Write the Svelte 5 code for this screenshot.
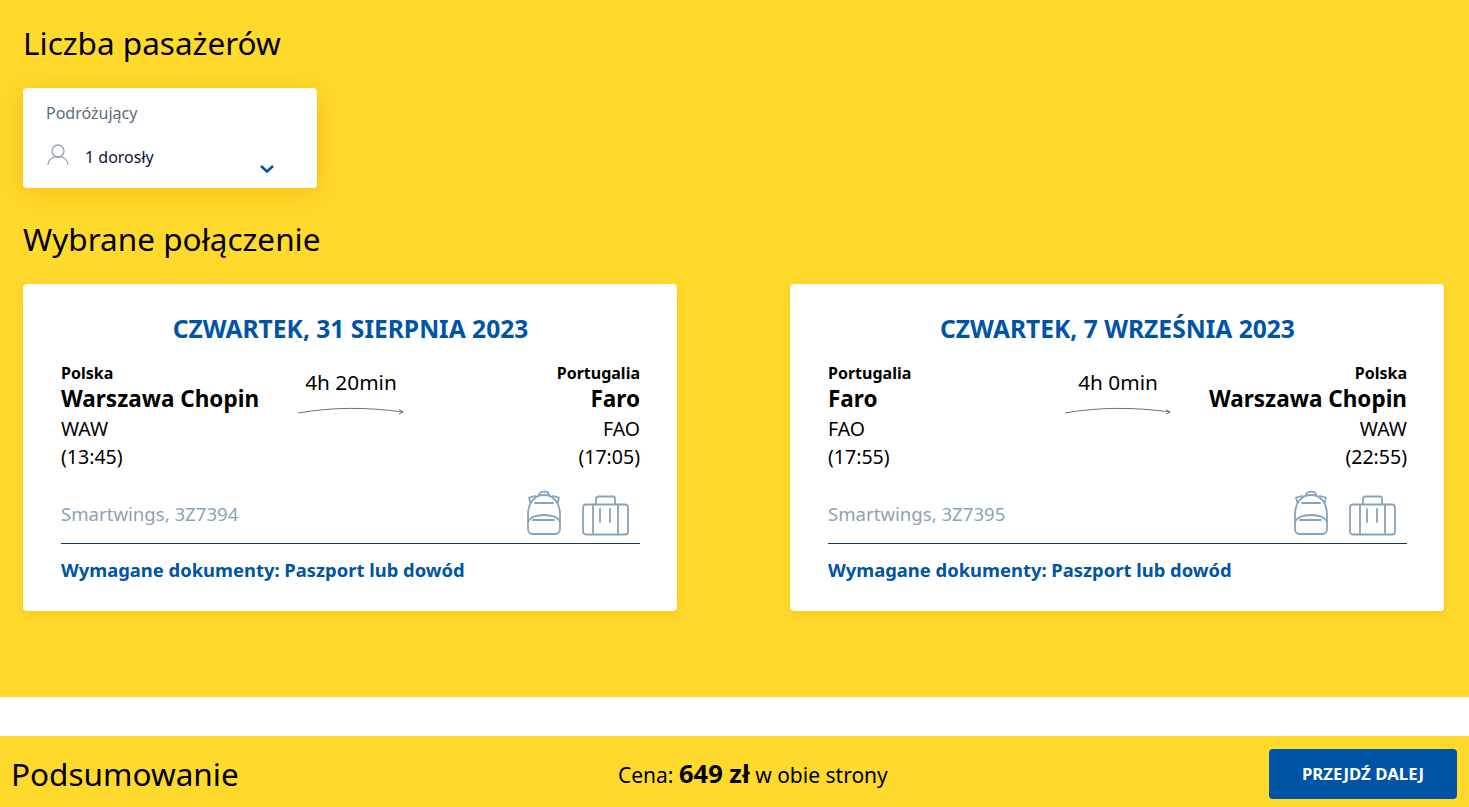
<script>
  const legs = [
    {
      date: 'CZWARTEK, 31 SIERPNIA 2023',
      fromCountry: 'Polska', fromCity: 'Warszawa Chopin', fromCode: 'WAW', fromTime: '(13:45)',
      toCountry: 'Portugalia', toCity: 'Faro', toCode: 'FAO', toTime: '(17:05)',
      duration: '4h 20min', flight: 'Smartwings, 3Z7394'
    },
    {
      date: 'CZWARTEK, 7 WRZEŚNIA 2023',
      fromCountry: 'Portugalia', fromCity: 'Faro', fromCode: 'FAO', fromTime: '(17:55)',
      toCountry: 'Polska', toCity: 'Warszawa Chopin', toCode: 'WAW', toTime: '(22:55)',
      duration: '4h 0min', flight: 'Smartwings, 3Z7395'
    }
  ];
</script>

<div class="page">
  <main class="main">
    <h2 class="title">Liczba pasażerów</h2>
    <div class="passengers">
      <div class="pass-label">Podróżujący</div>
      <div class="pass-row">
        <svg class="person" width="24" height="24" viewBox="0 0 24 24" fill="none" stroke="#8aa3b8" stroke-width="1.3">
          <circle cx="12" cy="8" r="6" />
          <path d="M2 22c0-5 4-8.500 10-8.500s10 3.500 10 8.500" />
        </svg>
        <span class="pass-value">1 dorosły</span>
        <svg class="chevron" width="16" height="10" viewBox="0 0 16 10" fill="none" stroke="#0054a6" stroke-width="2.600">
          <path d="M2 2l6 5.500L14 2" />
        </svg>
      </div>
    </div>

    <h2 class="title second">Wybrane połączenie</h2>
    <div class="cards">
      {#each legs as leg}
        <section class="card">
          <h3 class="date">{leg.date}</h3>
          <div class="route">
            <div class="end">
              <div class="country">{leg.fromCountry}</div>
              <div class="city">{leg.fromCity}</div>
              <div class="code">{leg.fromCode}</div>
              <div class="code">{leg.fromTime}</div>
            </div>
            <div class="middle">
              <div class="duration">{leg.duration}</div>
              <svg width="108" height="10" viewBox="0 0 108 10" fill="none" stroke="#4a4a4a" stroke-width="0.8">
                <path d="M1 8C35 2 70 2 106 7" />
                <path d="M102 4.500l4 2.500-4 2" />
              </svg>
            </div>
            <div class="end right">
              <div class="country">{leg.toCountry}</div>
              <div class="city">{leg.toCity}</div>
              <div class="code">{leg.toCode}</div>
              <div class="code">{leg.toTime}</div>
            </div>
          </div>
          <div class="flight-row">
            <span class="flight">{leg.flight}</span>
            <div class="bags">
              <svg width="36" height="46" viewBox="0 0 36 46" fill="none" stroke="#8aa3b8" stroke-width="1.800" stroke-linecap="round" stroke-linejoin="round">
                <path d="M13 5c0-4.500 10-4.500 10 0" />
                <path d="M4.500 13L3 7.500 9 6M31.500 13L33 7.500 27 6" />
                <path d="M2 25C2 13 8 5 18 5s16 8 16 20v14c0 3-2 5-4.500 5h-23C4 44 2 42 2 39z" />
                <path d="M2 32c2-5 8-7 16-7s14 2 16 7" />
                <path d="M9 13h18M7 30h21" />
              </svg>
              <svg width="48" height="42" viewBox="0 0 48 42" fill="none" stroke="#8aa3b8" stroke-width="1.800" stroke-linecap="round" stroke-linejoin="round">
                <path d="M14 10V5c0-1.500 1-2.500 2.500-2.500h15C33 2.500 33 3.500 33 5v5" />
                <rect x="1" y="10.500" width="45" height="30" rx="3" />
                <path d="M11 10.500v30M36 10.500v30M18 15v13M28 15v13" />
              </svg>
            </div>
          </div>
          <div class="docs">Wymagane dokumenty: Paszport lub dowód</div>
        </section>
      {/each}
    </div>
  </main>

  <footer class="summary">
    <div class="summary-title">Podsumowanie</div>
    <div class="price">Cena: <b>649 zł</b> w obie strony</div>
    <button class="next">PRZEJDŹ DALEJ</button>
  </footer>
</div>

<style>
  :global(body) {
    margin: 0;
    background: #fff;
    font-family: "Noto Sans", "Open Sans", sans-serif;
    color: #000;
  }
  .page {
    height: 807px;
    display: flex;
    flex-direction: column;
    justify-content: space-between;
    overflow: hidden;
  }
  .main {
    height: 697px;
    box-sizing: border-box;
    background: #ffd92c;
    padding: 23px 25px 0 23px;
  }
  .title {
    margin: 0;
    font-size: 31.500px;
    font-weight: 400;
    line-height: 40px;
  }
  .second {
    margin-top: 31px;
  }
  .passengers {
    margin-top: 25px;
    width: 294px;
    height: 100px;
    box-sizing: border-box;
    padding: 14px 42px 0 23px;
    background: #fff;
    border-radius: 4px;
    box-shadow: 0 4px 24px rgba(235, 175, 0, 0.6);
  }
  .pass-label {
    font-size: 16px;
    line-height: 22px;
    color: #5b6b7a;
  }
  .pass-row {
    display: flex;
    align-items: flex-start;
    margin-top: 22px;
  }
  .person {
    margin-right: 15px;
    margin-top: -3px;
  }
  .pass-value {
    font-size: 16px;
    line-height: 22px;
    color: #10103a;
  }
  .chevron {
    margin-left: auto;
    margin-top: 18px;
  }
  .cards {
    margin-top: 25px;
    display: grid;
    grid-template-columns: 654px 654px;
    justify-content: space-between;
  }
  .card {
    height: 327px;
    box-sizing: border-box;
    padding: 27px 37px 0 38px;
    background: #fff;
    border-radius: 4px;
    box-shadow: 0 3px 10px rgba(235, 180, 0, 0.4);
  }
  .date {
    margin: 0;
    text-align: center;
    font-size: 24.600px;
    font-weight: 700;
    line-height: 36px;
    color: #0054a6;
  }
  .route {
    display: flex;
    justify-content: space-between;
    margin-top: 13px;
  }
  .end {
    width: 230px;
  }
  .right {
    text-align: right;
  }
  .country {
    font-size: 16px;
    font-weight: 700;
    line-height: 20px;
    margin-top: 3px;
  }
  .city {
    font-size: 22.500px;
    font-weight: 700;
    line-height: 32px;
  }
  .code {
    font-size: 19.500px;
    line-height: 28px;
  }
  .middle {
    width: 108px;
    margin-left: 1px;
    padding-top: 8px;
    text-align: center;
  }
  .duration {
    font-size: 20.800px;
    line-height: 28px;
    margin-bottom: 9px;
  }
  .middle svg {
    display: block;
  }
  .flight-row {
    display: flex;
    justify-content: space-between;
    align-items: center;
    height: 60px;
    margin-top: 12px;
    border-bottom: 1px solid #0f3b5f;
  }
  .flight {
    font-size: 18.600px;
    color: #8aa3b8;
  }
  .bags {
    display: flex;
    align-items: flex-end;
    gap: 20px;
    padding-right: 10px;
  }
  .docs {
    margin-top: 12px;
    font-size: 18.400px;
    font-weight: 700;
    line-height: 28px;
    color: #0054a6;
  }
  .summary {
    height: 71px;
    box-sizing: border-box;
    padding: 4px 12px 0 11px;
    background: #ffd92c;
    display: grid;
    grid-template-columns: 607px auto 1fr;
    align-items: center;
  }
  .summary-title {
    font-size: 31.500px;
    line-height: 40px;
  }
  .price {
    font-size: 21px;
    margin-bottom: 2px;
  }
  .price b {
    font-size: 25.500px;
  }
  .next {
    justify-self: end;
    width: 188px;
    height: 50px;
    border: none;
    border-radius: 4px;
    background: #0054a6;
    color: #fff;
    font-family: inherit;
    font-size: 16.800px;
    font-weight: 700;
  }
</style>
